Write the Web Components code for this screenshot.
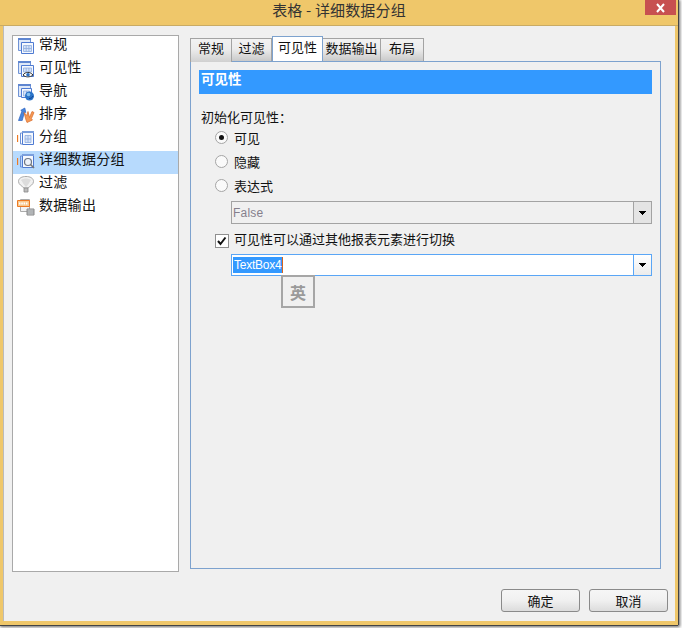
<!DOCTYPE html>
<html>
<head>
<meta charset="utf-8">
<style>
  html, body { margin: 0; padding: 0; background: #fff; width: 682px; height: 628px; overflow: hidden; }
  body { font-family: "Noto Sans CJK SC", "Liberation Sans", sans-serif; font-size: 13px; color: #111; }
</style>
</head>
<body>
<dialog-window>
  <span slot="title">表格 - 详细数据分组</span>
  <nav-list slot="nav">
    <nav-item>
      <svg slot="icon" width="18" height="18" viewBox="0 0 18 18"><path d="M1.500 1.500h12v12h-12z" fill="#dfe9f8" stroke="#6f93d6"/><path d="M1 1h13v2H1z" fill="#5f86d0"/><path d="M4.500 5.500h12v11h-12z" fill="#f6f9fe" stroke="#4f7bd2"/><path d="M6.500 8.500h8v6h-8zM9.200 8.500v6M11.900 8.500v6M6.500 11.500h8" fill="#d5e2f8" stroke="#8fadde" stroke-width=".8"/></svg>
      常规
    </nav-item>
    <nav-item>
      <svg slot="icon" width="18" height="18" viewBox="0 0 18 18"><path d="M1.500 1.500h12v12h-12z" fill="#dfe9f8" stroke="#6f93d6"/><path d="M1 1h13v2H1z" fill="#5f86d0"/><path d="M4.500 5.500h12v11h-12z" fill="#f6f9fe" stroke="#4f7bd2"/><path d="M6.500 8h8v4h-8zM9.200 8v4M11.900 8v4" fill="#d5e2f8" stroke="#8fadde" stroke-width=".8"/><path d="M6 15c2.500-3.500 7-3.500 10 0-3 2.500-7.500 2.500-10 0z" fill="#fff" stroke="#333"/><circle cx="11" cy="14.800" r="1.800" fill="#2a6fc4"/></svg>
      可见性
    </nav-item>
    <nav-item>
      <svg slot="icon" width="18" height="18" viewBox="0 0 18 18"><path d="M1.500 1.500h12v12h-12z" fill="#dfe9f8" stroke="#6f93d6"/><path d="M1 1h13v2H1z" fill="#5f86d0"/><path d="M4.500 5.500h10v9h-10z" fill="#f6f9fe" stroke="#4f7bd2"/><path d="M6.500 8h6v5h-6zM9.500 8v5" fill="#d5e2f8" stroke="#8fadde" stroke-width=".8"/><circle cx="12.500" cy="13" r="4.500" fill="#2b74c8"/><circle cx="11.500" cy="11.500" r="1.800" fill="#86c0ee"/><path d="M12 15.500c2 0 3.500-1 4-2.500" stroke="#123f8a" fill="none"/></svg>
      导航
    </nav-item>
    <nav-item>
      <svg slot="icon" width="18" height="18" viewBox="0 0 18 18"><path d="M1.500 14.500 5 5 3.800 4.300 7.800 2 8.800 6.500 7.500 6 5.200 14.500z" fill="#4a86dc" stroke="#2a62c0" stroke-width=".7"/><path d="M7 6.500 9 14l1 2.500 5.500-2.500-1.200-1.200L17 6.500l-2-1-2.500 6-1.500-6-1.200 4z" fill="#f59a55" stroke="#d9682a" stroke-width=".7"/></svg>
      排序
    </nav-item>
    <nav-item>
      <svg slot="icon" width="18" height="18" viewBox="0 0 18 18"><path d="M.5 6v7" stroke="#ee7a22" stroke-width="1.300"/><path d="M5 4H3.500v11H5" fill="none" stroke="#6f93d6"/><path d="M5.500 2.500h11v13h-11z" fill="#f6f9fe" stroke="#4f7bd2"/><path d="M5 2h12v2H5z" fill="#7b9fdc"/><path d="M8 6.500h6v7H8zM11 6.500v7M8 10h6" fill="#d5e2f8" stroke="#8fadde" stroke-width=".8"/></svg>
      分组
    </nav-item>
    <nav-item selected>
      <svg slot="icon" width="18" height="18" viewBox="0 0 18 18"><path d="M.5 6v7" stroke="#ee7a22" stroke-width="1.300"/><path d="M5 4H3.500v11H5" fill="none" stroke="#6f93d6"/><path d="M5.500 2.500h11v13h-11z" fill="#f6f9fe" stroke="#4f7bd2"/><path d="M5 2h12v2H5z" fill="#7b9fdc"/><circle cx="11" cy="10" r="3.500" fill="#eef3fb" stroke="#6d7684" stroke-width="1.200"/><path d="m13.500 12.500 3.500 3.500" stroke="#777" stroke-width="1.600"/></svg>
      详细数据分组
    </nav-item>
    <nav-item>
      <svg slot="icon" width="18" height="18" viewBox="0 0 18 18"><path d="M1.500 6.500C1.500 3 5 1.500 9 1.500s7.500 1.500 7.500 5c0 3-3.500 4.500-5.500 6.500H7C5 11 1.500 9.500 1.500 6.500z" fill="#f1f1f1" stroke="#aaa"/><path d="M4 5c3-2 7-2 10 0-2 3-3 5-5 7-2-2-3-4-5-7z" fill="#dcdcdc"/><path d="M7 13h4v4H7z" fill="#bbb" stroke="#888" stroke-width=".8"/></svg>
      过滤
    </nav-item>
    <nav-item>
      <svg slot="icon" width="18" height="18" viewBox="0 0 18 18"><path d="M3.500 1.500h9v12h-9z" fill="#f3f3f3" stroke="#aaa"/><path d="M.5 2.500h12v6H.5z" fill="#f8c98f" stroke="#ee7a22"/><path d="M2 5.500h9" stroke="#fff" stroke-width="2" stroke-dasharray="1.500 .8"/><path d="M10 11h7v6h-7z" fill="#c8ccd0" stroke="#888"/><path d="M10 13h7M10 15h7" stroke="#888" stroke-width=".7"/></svg>
      数据输出
    </nav-item>
  </nav-list>
  <tab-panel slot="main">
    <tab-item slot="tabs" first style="width:42px">常规</tab-item>
    <tab-item slot="tabs" style="width:40px">过滤</tab-item>
    <tab-item slot="tabs" active style="width:51px">可见性</tab-item>
    <tab-item slot="tabs" style="width:58px">数据输出</tab-item>
    <tab-item slot="tabs" style="width:43px">布局</tab-item>
    <section-head>可见性</section-head>
    <form-body>
      <div slot="lead">初始化可见性：</div>
      <radio-row checked>可见</radio-row>
      <radio-row>隐藏</radio-row>
      <radio-row>表达式</radio-row>
      <combo-box disabled value="False"></combo-box>
      <check-row checked>可见性可以通过其他报表元素进行切换</check-row>
      <combo-box focused value="TextBox4"><ime-badge>英</ime-badge></combo-box>
    </form-body>
  </tab-panel>
  <dialog-button slot="actions">确定</dialog-button>
  <dialog-button slot="actions">取消</dialog-button>
</dialog-window>

<script>
const define = (name, css, html, init) => {
  customElements.define(name, class extends HTMLElement {
    constructor() {
      super();
      this.attachShadow({ mode: 'open' }).innerHTML = `<style>${css}</style>${html}`;
      if (init) init(this, this.shadowRoot);
    }
  });
};

define('dialog-window', `
  :host { display: flex; flex-direction: column; width: 678px; height: 625px; background: #efc76a; box-shadow: 1px 0 0 #444, 0 1px 0 #444, 1px 1px 3px 1px rgba(0,0,0,.6); }
  .title { flex: none; height: 25px; display: flex; justify-content: center; align-items: center; position: relative; font-size: 15px; color: #333; border-bottom: 1px solid #c9ab64; }
  .title ::slotted(span) { margin-bottom: 7px; letter-spacing: .15px; }
  .close { position: absolute; right: 2px; top: 0; width: 31px; height: 15px; background: #c75050; }
  .close svg { display: block; margin: 3px auto 0; }
  .client { flex: none; display: flex; flex-direction: column; margin: 0 3px; height: 595px; background: #f0f0f0; box-shadow: inset 1px 0 0 #bbb; }
  .top { flex: none; display: flex; gap: 11px; padding: 9px 14px 0 9px; height: 537px; }
  .actions { display: flex; justify-content: flex-end; gap: 9px; padding: 17px 7px 0 0; }
`, `
  <div class="title"><slot name="title"></slot><div class="close"><svg width="11" height="10" viewBox="0 0 11 10"><path d="M2 1l7 8M9 1l-7 8" stroke="#fff" stroke-width="2"/></svg></div></div>
  <div class="client">
    <div class="top"><slot name="nav"></slot><slot name="main"></slot></div>
    <div class="actions"><slot name="actions"></slot></div>
  </div>
`);

define('nav-list', `
  :host { display: block; width: 167px; height: 537px; flex: none; box-sizing: border-box; background: #fff; border: 1px solid #a9a9a9; }
`, `<slot></slot>`);

define('nav-item', `
  :host { display: flex; align-items: center; height: 23px; padding-left: 4px; font-size: 14px; letter-spacing: .3px; color: #111; }
  :host([selected]) { background: #b7dafd; }
  .icon { width: 18px; height: 18px; margin-right: 4px; margin-bottom: 4px; flex: none; display: flex; }
  .label { margin-bottom: 9px; }
`, `<span class="icon"><slot name="icon"></slot></span><span class="label"><slot></slot></span>`);

define('tab-panel', `
  :host { display: flex; flex-direction: column; width: 471px; margin-top: 1px; }
  .tabs { display: flex; align-items: flex-end; height: 26px; flex: none; position: relative; z-index: 1; margin-bottom: -1px; }
  .page { flex: 1; border: 1px solid #7da2ce; padding: 8px; height: 508px; max-height: 508px; box-sizing: border-box; }
`, `<div class="tabs"><slot name="tabs"></slot></div><div class="page"><slot></slot></div>`);

define('tab-item', `
  :host { display: flex; align-items: center; justify-content: center; box-sizing: border-box; height: 23px; margin-bottom: 1px; font-size: 13px; color: #111;
    background: linear-gradient(#f2f2f2, #ececec 45%, #c9c9c9); border: 1px solid #a3a3a3; border-bottom: 0; border-left: 0; }
  :host([first]) { border-left: 1px solid #a3a3a3; margin-bottom: 0; height: 24px; background: linear-gradient(#f2f2f2, #ececec 45%, #d0d0d0); }
  :host([active]) { height: 25px; background: #fff; border: 1px solid #7da2ce; border-bottom: 0; }
  span { margin-bottom: 6px; }
`, `<span><slot></slot></span>`);

define('section-head', `
  :host { display: flex; align-items: center; height: 24px; padding-left: 2px; background: #3399ff; color: #fff; font-weight: 700; font-size: 13.500px; }
  span { margin-bottom: 9px; }
`, `<span><slot></slot></span>`);

define('form-body', `
  :host { display: block; padding: 15px 0 0 2px; position: relative; }
  .lead { height: 16px; line-height: 16px; }
  .rows { display: flex; flex-direction: column; }
`, `<div class="lead"><slot name="lead"></slot></div><div class="rows"><slot></slot></div>`);

define('radio-row', `
  :host { display: flex; align-items: center; height: 24px; padding-left: 14px; gap: 6px; }
  i { width: 11px; height: 11px; border-radius: 50%; border: 1px solid #a5a5a5; background: #fafafa; display: flex; align-items: center; justify-content: center; }
  :host([checked]) b { display: block; }
  b { display: none; width: 5px; height: 5px; border-radius: 50%; background: #111; }
`, `<i><b></b></i><slot></slot>`);

define('check-row', `
  :host { display: flex; align-items: center; height: 24px; padding-left: 14px; margin-top: 4px; gap: 5px; }
  i { width: 12px; height: 12px; margin-top: 2px; flex: none; border: 1px solid #8f8f8f; background: #fff; display: flex; }
`, `<i><svg width="12" height="12" viewBox="0 0 12 12"><path d="M2 6l2.500 3L9.500 2.500" fill="none" stroke="#111" stroke-width="2"/></svg></i><span style="margin-bottom:3px"><slot></slot></span>`);

define('combo-box', `
  :host { display: flex; box-sizing: border-box; position: relative; height: 23px; margin: 4px 0 0 30px; width: 421px; border: 1px solid #a3a3a3; background: #f0f0f0; font: 12px "Liberation Sans", sans-serif; color: #857f8c; }
  :host([focused]) { height: 22px; border-color: #5aa6f6; background: #fff; color: #fff; margin-top: 2px; }
  .value { flex: 1; display: flex; align-items: center; padding-left: 1px; letter-spacing: .2px; }
  :host([focused]) .value span { background: #3399ff; box-shadow: 1px 0 0 #d9641e; height: 16px; line-height: 16px; padding: 0 1px; letter-spacing: -.25px; }
  .arrow { flex: none; width: 17px; display: flex; align-items: center; justify-content: center; border-left: 1px solid #a3a3a3; background: #e4e4e4; }
  :host([focused]) .arrow { border-left-color: #5aa6f6; background: linear-gradient(#fff, #ececec); }
  .arrow svg { display: block; }
`, `<div class="value"><span></span></div><div class="arrow"><svg width="7" height="4" viewBox="0 0 7 4"><path d="M0 0h7v1H6v1H5v1H4v1H3V3H2V2H1V1H0z" fill="#000"/></svg></div><slot></slot>`,
(el, root) => {
  root.querySelector('.value span').textContent = el.getAttribute('value') || '';
});

define('ime-badge', `
  :host { position: absolute; left: 49px; top: 20px; width: 34px; height: 33px; box-sizing: border-box; border: 2px solid #a6a6a6; background: #f0f0f0; color: #9a9a9a; font: 700 16px "Noto Sans CJK SC", sans-serif; display: flex; align-items: center; justify-content: center; }
`, `<slot></slot>`);

define('dialog-button', `
  :host { display: flex; align-items: center; justify-content: center; width: 79px; height: 23px; box-sizing: border-box; border: 1px solid #8a8a8a; border-radius: 3px; background: linear-gradient(#f6f6f6, #f0f0f0 50%, #dcdcdc); font-size: 13px; color: #111; }
`, `<slot></slot>`);
</script>
</body>
</html>
